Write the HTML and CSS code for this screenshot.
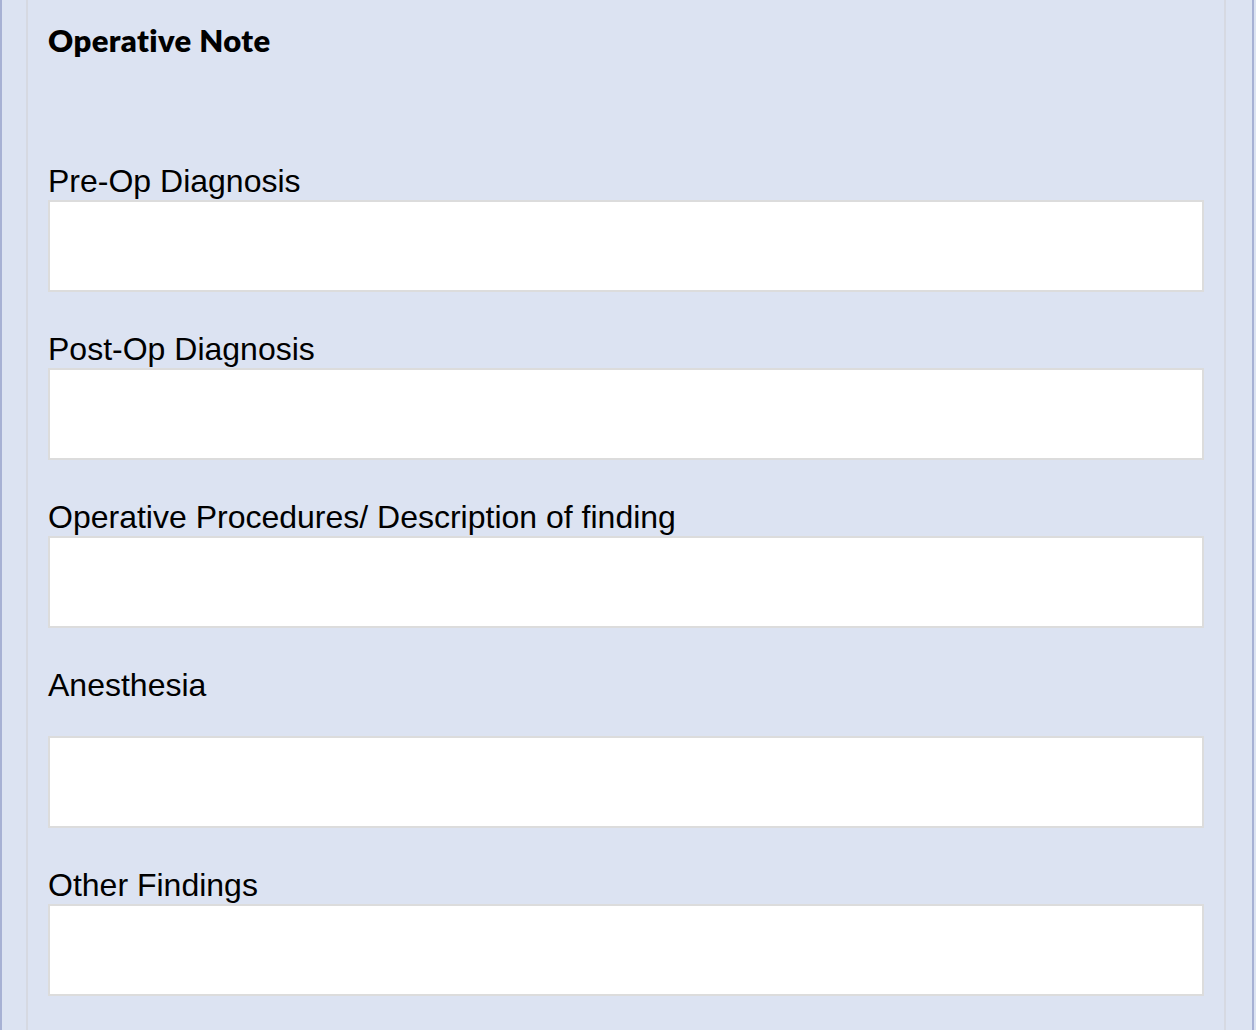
FILE: index.html
```html
<!DOCTYPE html>
<html>
<head>
    <title>Operative Note</title>
    <link rel="stylesheet" href="styles.css">
</head>
<body>
    <div class="frame">
        <div class="panel">
            <h2 class="panel-title">Operative Note</h2>
            <div class="field">
                <label class="field-label">Pre-Op Diagnosis</label>
                <textarea class="field-input"></textarea>
            </div>
            <div class="field">
                <label class="field-label">Post-Op Diagnosis</label>
                <textarea class="field-input"></textarea>
            </div>
            <div class="field">
                <label class="field-label">Operative Procedures/ Description of finding</label>
                <textarea class="field-input"></textarea>
            </div>
            <div class="field">
                <label class="field-label spaced">Anesthesia</label>
                <textarea class="field-input"></textarea>
            </div>
            <div class="field">
                <label class="field-label">Other Findings</label>
                <textarea class="field-input"></textarea>
            </div>
        </div>
    </div>
</body>
</html>
```

FILE: styles.css
```css
html, body {
    margin: 0;
    padding: 0;
    height: 100%;
    background-color: #dce3f2;
}
body {
    font-family: "Liberation Sans", Arial, sans-serif;
    color: #000;
    overflow: hidden;
}
.frame {
    box-sizing: border-box;
    min-height: 100%;
    margin-right: 2px;
    border-left: 2px solid #a7b1d4;
    border-right: 2px solid #a7b1d4;
    padding: 0 26px 0 24px;
}
.panel {
    box-sizing: border-box;
    min-height: 1030px;
    border-left: 2px solid #d6d9e2;
    border-right: 2px solid #d6d9e2;
    padding: 22px 20px 40px 20px;
}
.panel-title {
    font-family: Lato, "Noto Sans", sans-serif;
    font-weight: 800;
    font-size: 31px;
    letter-spacing: 0.4px;
    line-height: 36px;
    margin: 0 0 106px 0;
}
.field {
    display: flex;
    flex-direction: column;
    margin-bottom: 40px;
}
.field-label {
    font-size: 32px;
    line-height: 34px;
    margin-bottom: 2px;
}
.field-label.spaced {
    margin-bottom: 34px;
}
.field-input {
    display: block;
    box-sizing: border-box;
    width: 100%;
    height: 92px;
    margin: 0;
    border: 2px solid #dcdcdc;
    background-color: #fff;
    resize: none;
    outline: none;
}
```
